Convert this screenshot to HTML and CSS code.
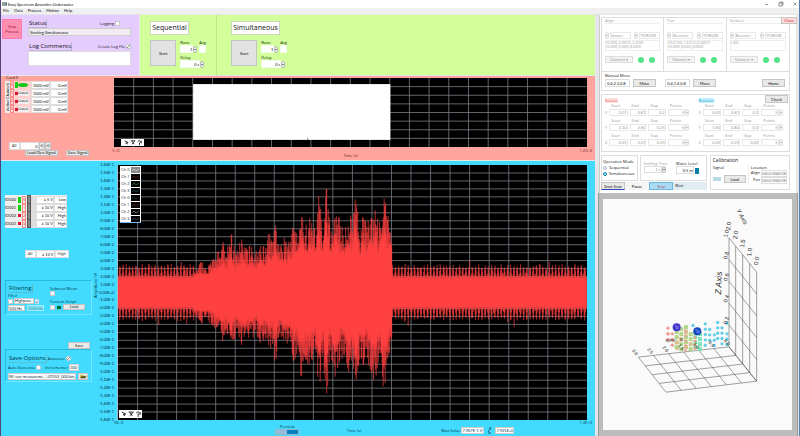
FILE: index.html
```html
<!DOCTYPE html>
<html lang="en">
<head>
<meta charset="utf-8">
<title>Easy Spectrum Acoustics Underwater</title>
<link rel="stylesheet" href="styles.css">
</head>
<body>
<header class="titlebar">
  <svg class="app-icon" viewBox="0 0 10 8"><path d="M0 1h10v6H0z" fill="#345"/><path d="M1 6V3h2v3M5 2v4M7 6V3h2" stroke="#fff" fill="none"/></svg>
  <span>Easy Spectrum Acoustics Underwater</span>
  <svg class="win-buttons" viewBox="0 0 34 6"><path d="M2 3.5h3M16 2h3v3h-3zM17 2V1h3v3h-1M30.500 1.500l3 3m0-3l-3 3" fill="none" stroke="#555" stroke-width=".6"/></svg>
</header>
<nav class="menubar"><a href="#">File</a><a href="#">Data</a><a href="#">Process</a><a href="#">Motion</a><a href="#">Help</a></nav>

<main class="workspace">
  <div class="left">
    <div class="top">
      <section class="status-panel">
        <button class="stop-process">Stop<br>Process</button>
        <div class="log">
          <div class="line"><h2>Status</h2><label class="tick logging">Logging <input type="checkbox"></label></div>
          <input class="status-text" aria-label="Status" value="Starting Simultaneous" readonly>
          <div class="line comments"><h2>Log Comments</h2><label class="tick">Create Log File <input class="ticked" type="checkbox" checked></label></div>
          <textarea aria-label="Log comments"></textarea>
        </div>
      </section>
      <section class="runs">
        <div class="run">
          <h1>Sequential</h1>
          <div class="run-body">
            <button class="start">Start</button>
            <div class="run-fields">
              <label>Runs<span class="spin w16"><input value="1"><i></i></span></label>
              <label>Avg<input class="avg"></label>
              <label class="wide">Delay<span class="spin w22"><input value="0 s"><i></i></span></label>
            </div>
          </div>
        </div>
        <div class="run second">
          <h1>Simultaneous</h1>
          <div class="run-body">
            <button class="start">Start</button>
            <div class="run-fields">
              <label>Runs<span class="spin w16"><input value="1"><i></i></span></label>
              <label>Avg<input class="avg"></label>
              <label class="wide">Delay<span class="spin w22"><input value="0 s"><i></i></span></label>
            </div>
          </div>
        </div>
      </section>
    </div>

    <section class="card-panel">
      <div class="side">
        <div class="card-title">Card 0</div>
        <div class="channels">
          <span class="vertical">Active Channels</span>
          <table id="out-table"></table>
        </div>
        <div class="all-row out-all"><span>All</span><input aria-label="All amplitude" value="0"><button>&gt;0</button><button>&lt;0</button></div>
        <div class="signal-buttons"><button>Load/Gen Signal</button><button>Save Signal</button></div>
      </div>
      <div class="chart out-chart">
        <div class="plot"><svg id="out-plot" viewBox="0 0 472 68" preserveAspectRatio="none"></svg>
          <div class="tools"><svg viewBox="0 0 24 8"><path d="M3 2l4 2-3 1M5 4l1 2M10 2h5M11 6l4-4M11 2l3 4M18 3q3-3 3 1M20 4v3M22 2v3" fill="none" stroke="#222"/></svg></div>
        </div>
        <div class="ticks"><span>5+0</span><span>1.20+0</span></div>
        <div class="axis-name">Time (s)</div>
      </div>
    </section>

    <section class="input-panel">
      <div class="side">
        <table id="in-table" class="in-table"></table>
        <div class="all-row in-all"><span>All</span><input aria-label="All range" value="± 10 V"><span>High</span></div>
        <fieldset class="group filtering">
          <div class="filter-left">
            <h2>Filtering</h2>
            <div>Filter</div>
            <div class="inline"><input type="checkbox" aria-label="Filter"><select aria-label="Filter type"><option>Highpass</option></select><b class="drop">⌄</b></div>
            <div class="inline freq"><input aria-label="Low frequency" value="100 Hz"><input class="dim" aria-label="High frequency" value="1000 Hz"></div>
          </div>
          <div class="filter-right">
            <label class="subtract">Subtract Mean<input type="checkbox"></label>
            <div class="script">Custom Script</div>
            <div class="inline"><input type="checkbox" aria-label="Custom script"><i class="led"></i><button>Load</button></div>
          </div>
        </fieldset>
        <button class="save">Save</button>
        <fieldset class="group saving">
          <div class="inline"><h2>Save Options</h2><label class="tick">Autosave<input class="round ticked" type="checkbox" checked></label></div>
          <div class="inline auto"><label class="tick">Auto Generate<input class="round" type="checkbox"></label><label class="tick inc">Incrementer<input value="300"></label></div>
          <div class="inline path"><input aria-label="File path" value="W:\usv measureme...\JD152_000.bin"><button aria-label="Browse"><svg viewBox="0 0 10 7"><path d="M1 6V1h3l1 1h3v1" fill="#cb4"/><path d="M1 6l2-3h7L8 6z" fill="#564d10"/></svg></button></div>
        </fieldset>
      </div>
      <div class="y-name"><span>Amplitude (V)</span></div>
      <div class="chart in-chart">
        <div class="y-and-plot">
          <div class="y-axis" id="y-axis"></div>
          <div class="plot"><svg id="in-plot" viewBox="0 0 469 255" preserveAspectRatio="none"></svg>
            <div class="legend" id="legend"></div>
            <div class="tools"><svg viewBox="0 0 24 8"><path d="M3 2l4 2-3 1M5 4l1 2M10 2h5M11 6l4-4M11 2l3 4M18 3q3-3 3 1M20 4v3M22 2v3" fill="none" stroke="#222"/></svg></div>
          </div>
        </div>
        <div class="ticks under"><span>0E+0</span><span>1.2E+0</span></div>
        <div class="chart-foot">
          <label class="preview">Preview<span class="toggle"><input type="checkbox" checked></span></label>
          <span class="time">Time (s)</span>
          <div class="max"><label>Max Value <input value="7.907E-1 V"></label><svg viewBox="0 0 5 7"><path d="M1 6h3M1 5l3-4H2" fill="none" stroke="#157"/></svg><input aria-label="Time of max" value="7.921E+0"></div>
        </div>
      </div>
    </section>
  </div>

  <div class="right">
    <section class="motion">
      <button class="close">Close</button>
      <div class="motion-box">
        <div class="devices" id="devices"></div>
        <div class="manual">
          <div>Manual Move</div>
          <div class="manual-row">
            <div><input aria-label="Align target" value="0.4,2.3,0.8"><button>Move</button></div>
            <div><input aria-label="Pan target" value="0.4,1.6,0.8"><button>Move</button></div>
            <button class="home">Home</button>
          </div>
        </div>
      </div>
      <div class="scan-box">
        <div class="scan-half"><span class="tag source">Source</span><table id="src-table"></table></div>
        <div class="scan-half receiver-half"><div class="scan-head"><span class="tag receiver">Receiver</span><button>Check</button></div><table id="rec-table"></table></div>
      </div>
      <div class="ops">
        <div class="ops-left">
          <div class="ops-row">
            <fieldset class="mode"><div>Operation Mode</div><label><input type="radio" name="mode">Sequential</label><label><input type="radio" name="mode" checked>Simultaneous</label></fieldset>
            <div class="water">
              <label class="faint">Settling Time<span class="spin"><input value="1 s"><i></i></span></label>
              <label>Water Level<span class="level"><input value="0.5 m"><i></i></span></label>
            </div>
          </div>
          <div class="scan-buttons"><button class="scan">Start Scan</button><button class="plain">Pause</button><button class="stop">Stop</button><span>Wait</span></div>
        </div>
        <div class="calibration">
          <div class="cal-title">Calibration</div>
          <div class="cal-body">
            <div>Signal<div class="inline cal-load"><i class="mini"></i><button>Load</button></div></div>
            <div class="location"><div>Location</div><label>Align <input value="0402.WAV28"></label><label>Pan <input value="0402.WAV28"></label></div>
          </div>
        </div>
      </div>
    </section>
    <section class="scene"><svg id="scene" viewBox="24 30 567 690"></svg></section>
  </div>
</main>
<script src="app.js"></script>
</body>
</html>
```
FILE: styles.css
```css
* { box-sizing: border-box; }
body { margin: 0; min-height: 100vh; display: flex; flex-direction: column; font: 4px/5px "Open Sans", "Liberation Sans", sans-serif; color: #111; background: #e4e6ea; border-left: 1px solid #547; border-right: 1px solid #5580b0; }
h1, h2 { margin: 0; font-weight: 400; }
h2 { font-size: 6px; line-height: 7px; border: 1px solid transparent; border-right-color: #8887; border-bottom-color: #8885; }
button, input, select, textarea { font: inherit; font-family: Lato, "Open Sans", sans-serif; color: inherit; margin: 0; border-radius: 0; }
button { padding: 0 2px; border: 1px solid #c4c4c4; background: #e9e9e9; height: 8px; white-space: nowrap; }
input, select { appearance: none; border: 1px solid #ccc; background: #fff; height: 8px; padding: 0; min-width: 0; }
input[type=checkbox] { width: 5px; height: 5px; padding: 0; border: 1px solid #c8c8c8; flex: none; background: #fff; }
input[type=checkbox].ticked { background: linear-gradient(135deg, #fff 40%, #777 40%, #777 60%, #fff 60%); }
fieldset { margin: 0; padding: 0; border: 0; min-width: 0; }
table { border-spacing: 0; border-collapse: collapse; }
td, th { padding: 0; font-weight: 400; }
i { font-style: normal; }

.titlebar { height: 8px; background: #fff; display: flex; align-items: center; padding: 0 2px 0 1px; font-family: Lato, sans-serif; }
.app-icon { width: 5px; height: 4px; margin-right: 1px; }
.win-buttons { width: 34px; height: 6px; margin-left: auto; }
.menubar { height: 6px; background: #f0f0f0; display: flex; gap: 5px; padding: 0 2px; font-family: Lato, sans-serif; }
.menubar a { color: inherit; text-decoration: none; }
.workspace { flex: 1; display: grid; grid-template-columns: 594fr 204fr; padding-top: 1px; }
.left { display: grid; grid-template-rows: auto auto 1fr; row-gap: 1px; min-width: 0; }
.top { display: grid; grid-template-columns: 138fr 454fr; column-gap: 1px; }

.status-panel { background: #e5ccff; display: flex; gap: 6px; padding: 4px 8px 9px 1px; }
.stop-process { width: 20px; height: 20px; background: #ff8fb0; border: 1px solid #f7a; color: #a02048; }
.log { flex: 1; display: flex; flex-direction: column; }
.line { display: flex; justify-content: space-between; align-items: center; }
.tick { display: flex; align-items: center; gap: 1px; }
.logging { margin-right: 11px; }
.status-text { height: 8px; padding-left: 1px; background: #f0ecf2; }
.comments { margin-top: 6px; }
.log textarea { flex: 1; resize: none; border: 1px solid #ddd; height: 15px; min-height: 15px; padding: 1px; }
.runs { background: #d2ff99; display: flex; }
.run { padding: 6px 10px 0; width: 77px; border-right: 1px solid #bde488; }
.second { padding-left: 14px; border: 0; }
.run h1 { width: max-content; background: #fff; font-size: 7px; line-height: 12px; padding: 0 1px; border: 1px solid #ccd8bb; }
.run-body { display: flex; gap: 4px; margin-top: 5px; }
.start { width: 26px; height: 26px; flex: none; background: #e2e2e2; }
.run-fields { display: flex; flex-wrap: wrap; gap: 0 2px; width: 27px; flex: none; align-content: flex-start; }
.run-fields label, .water label { display: flex; flex-direction: column; }
.run-fields .wide { margin-top: 2px; width: 100%; }
.avg { width: 7px; }
.spin { display: flex; align-items: center; }
.spin input { width: 100%; height: 7px; text-align: right; }
.run-fields input { height: 8px; border-color: #f2faea; }
.spin i { flex: none; width: 4px; height: 7px; border: 1px solid #bbb; border-radius: 2px; background: linear-gradient(#eee 2px, #888 2px, #888 3px, #eee 3px); }
.w16 { width: 17px; }
.w22 { width: 24px; }

.card-panel { background: #ffa59e; display: grid; grid-template-columns: 108fr 480fr; padding: 0 0 0 4px; }
.side { min-width: 0; }
.card-title { padding-left: 1px; line-height: 4px; margin-bottom: 1px; }
.channels { display: flex; width: 63px; background: #ffd2ce; }
.vertical { writing-mode: vertical-rl; transform: rotate(180deg); text-align: center; width: 5px; height: 32px; background: #eee; white-space: nowrap; font-family: Lato, sans-serif; }
.channels table { flex: 1; }
.channels td { height: 8px; }
.channels input, .in-table input { width: 100%; display: block; text-align: right; border-color: #ddd; }
.num { display: block; width: 4px; line-height: 6px; border: 1px solid #f88; color: #c00; font-size: 3px; }
.led { display: block; width: 3px; height: 3px; background: #e01030; }
.led.on { height: 6px; background: #10d010; }
.pill { display: block; width: 10px; height: 4px; border-radius: 50%; background: #10c818; }
.tiny { background: #eee; display: block; width: 11px; font-size: 3px; }
.all-row { display: flex; align-items: center; }
.all-row span { background: #fff; line-height: 6px; height: 8px; border: 1px solid #ddd; padding: 0 2px; }
.all-row input { width: 19px; text-align: right; border-color: #ddd; }
.out-all { margin: 29px 0 0 4px; }
.out-all button { padding: 0; width: 6px; font-size: 3px; }
.signal-buttons { display: flex; gap: 8px; margin: 0 0 4px 20px; }
.signal-buttons button { height: 6px; line-height: 4px; padding: 0 1px; }
.chart { display: flex; flex-direction: column; min-width: 0; }
.plot { position: relative; flex: 1; min-height: 0; background: #000; }
.plot > svg { position: absolute; width: 100%; height: 100%; display: block; }
.tools { position: absolute; left: 7px; bottom: 1px; width: 23px; height: 7px; background: #fff; }
.tools svg { display: block; width: 100%; height: 100%; }
.out-chart { padding: 2px 8px 0 1px; }
.out-chart .ticks { color: #622; }
.ticks { display: flex; justify-content: space-between; margin: 1px -5px 0 -2px; }
.axis-name { text-align: center; color: #622; margin-bottom: 2px; }

.input-panel { background: #42dbff; display: grid; grid-template-columns: 87fr 6fr 496fr; padding: 4px 0 0 4px; color: #034; }
.in-table { width: 62px; margin-top: 30px; background: #eee; color: #222; }
.in-table td { height: 8px; }
.in-table td:first-child { font-family: Lato, sans-serif; }
.in-table .led { margin: 0 1px; }
.bar { width: 3px; background: #888; border: 1px solid #555; }
.knob { width: 6px; background: #ddd; }
.in-all { margin: 22px 0 0 20px; color: #222; }
.group { border: 1px solid #27b8df; border-right-color: #75e6ff; border-bottom-color: #75e6ff; }
.filtering { display: flex; gap: 6px; height: 35px; margin-top: 22px; padding: 3px 2px; }
.filter-left { width: 36px; flex: none; }
.filter-left h2 { width: max-content; }
.inline { display: flex; align-items: center; gap: 1px; }
.inline select { width: 20px; height: 6px; line-height: 4px; }
.drop { font-weight: 400; background: #cde; width: 4px; line-height: 5px; }
.freq { margin-top: 1px; gap: 2px; }
.freq input { width: 17px; height: 6px; line-height: 4px; }
.freq .dim { background: #82e4fb; border-color: #9ef; color: #499; }
.filter-right { padding-top: 2px; white-space: nowrap; }
.filter-right .inline { gap: 2px; }
.subtract { display: flex; flex-direction: column; }
.filter-right .led { background: #063; width: 4px; }
.filter-right button { width: 22px; height: 6px; line-height: 4px; }
.script { margin-top: 3px; }
.save { display: block; margin: 27px 2px 0 auto; width: 22px; height: 7px; line-height: 4px; color: #222; }
.saving { padding: 4px 2px 2px; height: 33px; }
.tick .round { border-radius: 2px; }
.auto { justify-content: space-between; padding-right: 10px; margin: 1px 0 2px; }
.inc input { width: 10px; height: 7px; }
.path { gap: 2px; }
.path input { width: 68px; height: 7px; }
.path button { width: 10px; height: 7px; padding: 0; }
.path svg { display: block; width: 8px; height: 5px; }
.y-name { display: flex; align-items: center; justify-content: center; padding-bottom: 30px; }
.y-name span { writing-mode: vertical-rl; transform: rotate(180deg); }
.in-chart { padding-right: 8px; }
.y-and-plot { display: flex; flex: 1; }
.y-axis { display: flex; flex-direction: column; justify-content: space-between; width: 19px; margin: -2px 0; line-height: 4px; text-align: right; padding-right: 3px; font-family: Lato, sans-serif; }
.in-chart .plot { border-left: 1px solid #abc; }
.in-chart .tools { left: 1px; bottom: 2px; height: 8px; }
.legend { position: absolute; left: 2px; top: 1px; width: 21px; padding: 0 1px; background: #fff; border-bottom: 1px solid #7bf; color: #222; }
.legend div { display: flex; justify-content: space-between; align-items: center; height: 7px; }
.legend svg { width: 9px; height: 6px; background: #000; }
.legend .active svg { background: #888; }
.under { margin-left: 16px; margin-top: 1px; line-height: 4px; }
.chart-foot { display: grid; grid-template-columns: 201px 62px 1fr; align-items: center; height: 11px; padding-bottom: 1px; }
.preview { justify-self: end; width: 24px; line-height: 4px; text-align: center; }
.toggle { display: block; background: #9bd; border: 1px solid #8bc; }
.toggle input[type=checkbox] { display: block; margin-left: auto; width: 11px; height: 4px; border: 0; background: #087fc0; }
.time { text-align: right; }
.max { display: flex; align-items: center; gap: 3px; padding-left: 80px; }
.max label { display: flex; align-items: center; gap: 1px; white-space: nowrap; }
.max input { height: 7px; width: 23px; }
.max svg { width: 5px; height: 7px; }
.max > input { width: 19px; }

.right { display: grid; grid-template-rows: auto 1fr; min-width: 0; }
.motion { position: relative; background: #fff; margin: 0 3px 0 4px; border-left: 1px solid #ccc; padding: 2px 6px 3px 1px; display: flex; flex-direction: column; gap: 3px; }
.motion input { border-color: #ddd; }
.close { position: absolute; right: -1px; top: 2px; height: 7px; line-height: 4px; background: #fdd; color: #c33; }
.motion-box, .scan-box { border: 1px solid #ddd; }
.devices { display: grid; grid-template-columns: 1fr 1fr 1fr; color: #999; }
.device { border-right: 1px solid #ddd; padding: 1px 3px; height: 53px; }
.device:last-child { border: 0; }
.dev-name { border-bottom: 1px solid #eee; line-height: 4px; }
.dev-row { display: flex; justify-content: space-between; margin-top: 8px; }
.dev-row .spin { gap: 1px; }
.dev-row select { width: 21px; height: 7px; border-color: #e8e8e8; }
.dev-row .spin i, .scan-half .spin i { opacity: .5; }
.readout { border: 1px solid #eee; height: 11px; margin-top: 1px; line-height: 4px; white-space: nowrap; }
.connect { display: flex; align-items: center; gap: 5px; margin-top: 5px; }
.connect button { width: 28px; height: 7px; line-height: 4px; background: #f3f3f3; border-color: #ddd; }
.connect i { width: 6px; height: 6px; border-radius: 50%; background: #55e388; }
.manual { border-top: 1px solid #ddd; padding: 1px 3px 3px; }
.manual-row { display: grid; grid-template-columns: 1fr 1fr 1fr; padding-top: 1px; }
.manual-row div { display: flex; gap: 3px; }
.manual-row input { width: 25px; padding-left: 1px; }
.manual-row button { width: 23px; }
.manual-row .home { justify-self: end; margin-right: 1px; }
.scan-box { display: grid; grid-template-columns: 1fr 1fr; height: 58px; color: #999; }
.scan-half { padding: 3px 1px 0 3px; }
.receiver-half { padding-top: 0; }
.scan-head { display: flex; justify-content: space-between; height: 8px; }
.scan-head button { width: 23px; color: #222; }
.tag { display: inline-block; height: 5px; line-height: 5px; }
.source { color: #d66; background: #fdd; }
.receiver { color: #299dbb; background: #bff0ff; margin-top: 3px; }
.scan-half table { width: 86px; }
.scan-half th { text-align: left; line-height: 6px; padding-left: 2px; }
.scan-half td { padding-right: 2px; padding-bottom: 2px; }
.scan-half td input { width: 100%; height: 7px; display: block; text-align: right; border-color: #e6e6e6; }
.ops { display: grid; grid-template-columns: 108fr 82fr; gap: 3px; }
.ops-row { display: grid; grid-template-columns: 37fr 68fr; gap: 2px; }
.mode, .water, .calibration { border: 1px solid #ddd; }
.mode { padding: 3px 1px; height: 26px; white-space: nowrap; }
.mode label { display: flex; align-items: center; gap: 2px; margin-top: 1px; }
.mode input { width: 4px; height: 4px; border-radius: 50%; padding: 0; border: 1px solid #abc; }
.mode input:checked { border-color: #07a; background: #cff; }
.water { display: flex; gap: 8px; padding: 5px 3px; white-space: nowrap; }
.faint { color: #999; }
.water .spin { width: 22px; }
.level { display: flex; }
.level input { width: 18px; text-align: right; }
.level i { width: 4px; height: 6px; background: #087da8; margin: 2px 0 0 1px; }
.scan-buttons { display: flex; align-items: center; margin-top: 1px; background: #f5f5f5; }
.scan-buttons button { width: 24px; }
.scan-buttons .scan { border-bottom-color: #34b; padding: 0 1px; }
.scan-buttons .plain { background: transparent; border-color: transparent; }
.scan-buttons .stop { background: #a9dcf2; border-color: #6bb8dc; color: #a57; }
.scan-buttons span { flex: 1; padding-left: 2px; background: #e1edf3; line-height: 8px; }
.calibration { padding: 2px; height: 35px; }
.cal-title { font-size: 5px; }
.cal-body { display: flex; justify-content: space-between; margin-top: 2px; }
.cal-load { margin-top: 5px; gap: 3px; }
.cal-load button { width: 22px; }
.mini { width: 8px; height: 4px; background: #b7dbe8; }
.location label { display: flex; justify-content: flex-end; gap: 1px; }
.location { border-left: 1px solid #eee; padding-left: 2px; }
.location input { width: 26px; height: 7px; color: #777; }
.scene { background: #bcbcbc; border: 1px solid #999; border-width: 0 1px; margin: 0 1px 0 3px; padding: 6px 5px 6px 4px; display: flex; }
.scene svg { flex: 1; width: 100%; min-height: 0; background: #fafafa; }
.scene text { font-family: "Liberation Sans", sans-serif; }
```
FILE: app.js
```js
const byId = id => document.getElementById(id);

function grid(w, h, cols, rows) {
  let d = '';
  for (let i = 1; i < cols; i++) d += `M${w * i / cols} 0v${h}`;
  for (let i = 1; i < rows; i++) d += `M0 ${h * i / rows}h${w}`;
  return `<path d="${d}" stroke="#7c7c86" stroke-width=".8" fill="none"/>`;
}

byId('out-plot').innerHTML = grid(472, 68, 24, 8) +
  '<rect x="79" y="6" width="197" height="55" fill="#fff"/><path d="M193.500 59v2" stroke="#333" stroke-width=".6"/>';

// Received signal: steady noise floor with one growing pulse.
let seed = 7;
const rand = () => (seed = (seed * 16807) % 2147483647) / 2147483647;
const peaks = [[76, 22], [83, 32], [88, 26], [96, 37], [105, 50], [108, 40], [113, 60], [118, 40], [124, 56], [129, 44], [133, 50], [138, 42], [143, 53], [148, 46], [151, 64], [154, 50], [157, 74], [161, 46], [166, 56], [170, 50], [175, 68], [179, 64], [183, 86], [187, 68], [191, 78], [197, 64], [201, 100], [205, 66], [208, 111], [212, 64], [217, 94], [223, 66], [228, 68], [232, 88], [234, 70], [238, 104], [242, 62], [245, 78], [249, 68], [257, 92], [261, 70], [265, 100], [269, 84], [271, 68], [274, 70]];
function envelope(x) {
  for (let i = 1; i < peaks.length; i++) {
    if (x <= peaks[i][0]) {
      const [a, p] = peaks[i - 1], [b, q] = peaks[i];
      return p + (q - p) * (x - a) / (b - a);
    }
  }
  return 0;
}
let spikes = '';
const core = [[], []];
for (let x = 0; x < 469; x += .5) {
  const pulse = x > 76 && x < 274;
  const env = pulse ? envelope(x) : 0;
  for (let s = 0; s < 2; s++) {
    const k = rand();
    const beat = Math.pow(Math.abs(Math.sin(x * .98)), 3);
    const a = pulse ? Math.max(19, env * (.56 + .45 * k)) : 15 + beat * (10 + 4 * k) + (k > .95 ? 7 * rand() : 0);
    const y = 127.500 + (s ? a : -a);
    spikes += `M${x + .25} 127V${y.toFixed(1)}`;
    const c = pulse ? Math.max(18, env * (.5 + .22 * rand())) : 15;
    core[s].push(`${x},${(127.500 + (s ? c : -c)).toFixed(1)}`);
  }
}
byId('in-plot').innerHTML = grid(469, 255, 24, 32) +
  `<path d="${spikes}" stroke="#ff4040" stroke-width=".7" fill="none"/>` +
  `<polygon points="${core[0].concat(core[1].reverse()).join(' ')}" fill="#ff4040"/>`;

let axis = '';
for (let i = 16; i >= -16; i--) {
  const v = Math.abs(i);
  axis += `<span>${i < 0 ? '-' : ''}${v >= 10 ? (v / 10).toFixed(2) + 'E-1' : v ? v + '.00E-2' : '0.00E+0'}</span>`;
}
byId('y-axis').innerHTML = axis;

const colors = ['#fff', '#a33', '#4a4', '#288', '#265', '#a44', '#bbb', '#567'];
byId('legend').innerHTML = colors.map((c, i) =>
  `<div class="${i ? '' : 'active'}">Ch ${i % 4}<svg viewBox="0 0 9 6"><path d="M1 4l2-2 2 2 3-2" fill="none" stroke="${c}" stroke-width=".5"/></svg></div>`).join('');

byId('out-table').innerHTML = [3000, 1000, 1000, 1000].map((mv, i) =>
  `<tr><td><span class="num">${i}</span></td><td><i class="led ${i ? '' : 'on'}"></i></td><td>${i ? '<span class="tiny">Lowest</span>' : '<i class="pill"></i>'}</td>` +
  `<td style="width:19px"><input aria-label="Amplitude ${i}" value="${mv} mV"></td><td style="width:18px"><input aria-label="Offset ${i}" value="0 mV"></td></tr>`).join('');

byId('in-table').innerHTML = [['± 5 V', 'Low'], ['± 10 V', 'High'], ['± 10 V', 'High'], ['± 10 V', 'High']].map((r, i) =>
  `<tr><td>ID00${i}</td><td><i class="led ${i < 2 ? 'on' : ''}"></i></td><td><span class="num">${i}</span></td><td class="bar"></td><td class="knob"></td>` +
  `<td style="width:18px"><input aria-label="Range ${i}" value="${r[0]}"></td><td style="width:13px"><input aria-label="Level ${i}" value="${r[1]}"></td></tr>`).join('');

byId('devices').innerHTML = [
  ['Align', 'Source', '(0.000,2.0015,2.350)<br>(0.000,0.000,0.000)'],
  ['Pan', 'Receiver', '(0.0150,1.6013,0.0407)<br>(0.000,0.000,0.000)'],
  ['Vertical', 'Receiver', '(.00)']
].map(([name, kind, pos]) => `<div class="device"><div class="dev-name">${name}</div>
  <div class="dev-row"><span class="spin"><i></i><select aria-label="${name} role"><option>${kind}</option></select></span>
  <span class="spin"><i></i><select aria-label="${name} port"><option>TCIROIB</option></select></span></div>
  <div class="readout">${pos}</div><div class="connect"><button>Connect ▾</button><i></i><i></i></div></div>`).join('');

function scanTable(id, rows) {
  byId(id).innerHTML = rows.map((r, i) =>
    `<tr><th></th><th>Start</th><th>End</th><th>Gap</th><th>Points</th></tr><tr><td>${'XYZ'[i]}</td>` +
    r.map((v, j) => `<td>${j === 3 ? `<span class="spin"><input aria-label="Points" value="${v}"><i></i></span>` : `<input aria-label="Value" value="${v}">`}</td>`).join('') + '</tr>').join('');
}
scanTable('src-table', [['0.01', '0.81', '0.2', 5], ['2.10', '2.80', '0.25', 5], ['0.25', '0.25', '0.25', 5]]);
scanTable('rec-table', [['0.01', '0.81', '0.2', 5], ['1.60', '0.80', '0.2', 5], ['0.25', '0.25', '0.05', 5]]);

// Scan volume: wall and floor grids, then measurement points.
let g = '';
const line = (a, b, c, d) => { g += `M${a} ${b}L${c} ${d}`; };
[402, 422, 443, 464, 485].forEach((x, i) => line(x, 145 + 25.750 * i, x, 472 + 25.750 * i));
for (let i = 0; i < 6; i++) line(402, 145 + 65.400 * i, 485, 248 + 65.400 * i);
for (let i = 0; i < 5; i++) line(130 + 20.750 * i, 503 + 26.250 * i, 402 + 20.750 * i, 472 + 25.750 * i);
for (let i = 0; i < 7; i++) line(130 + 45.300 * i, 503 - 5.200 * i, 213 + 45.300 * i, 608 - 5.500 * i);
let s = `<path d="${g}" fill="none" stroke="#444" stroke-width="1.500"/>`;
const dot = (x, y, c, r = 5) => { s += `<circle cx="${x}" cy="${y}" r="${r}" fill="${c}"/>`; };
const square = (x, y, c) => { s += `<rect x="${x - 6}" y="${y - 6}" width="12" height="12" fill="${c}"/>`; };
[[219, 416, 2], [232, 433, 3], [246, 443, 3], [219, 433, 1], [219, 450, 1]].forEach(([x, y, n]) => {
  for (let j = 0; j < n; j++) dot(x, y + j * 17, '#f39c98');
});
for (let i = 0; i < 6; i++) for (let j = 0; j < 5; j++) {
  const x = 245 + i * 14, y = 413 + j * 15 + (i % 2) * 6;
  if (y < 486 && !(i > 2 && j < 1)) square(x, y, i > 3 ? '#7de3b8' : (i + j) % 3 ? '#b1d58b' : '#d6c393');
}
for (let i = 0; i < 5; i++) { dot(272, 423 + i * 15, '#f29a8d', 4); dot(300, 433 + i * 11, '#ec9c87', 4); }
[[294, 408, 1], [331, 403, 5], [344, 420, 3], [358, 436, 3], [368, 399, 4], [381, 415, 4], [396, 433, 3], [396, 401, 1]].forEach(([x, y, n]) => {
  for (let j = 0; j < n; j++) dot(x, y + j * 16, '#65cee9');
});
s += '<circle cx="245" cy="413" r="12" fill="#4334ca"/><circle cx="307" cy="425" r="12" fill="#1648c2"/><path d="M239 409h5v8h5v-8M301 421h5v8h6v-8" stroke="#98a3fa" fill="none" stroke-width="2"/>';
const text = (x, y, r, size, t, extra = '') => { s += `<text transform="translate(${x} ${y}) rotate(${r})" font-size="${size}" fill="#222" ${extra}>${t}</text>`; };
['1.0', '0.8', '0.6', '0.4', '0.2'].forEach((t, i) => text(396, 145 + 65 * i, -75, 16, t));
['2.0', '2.0', '1.5', '1.0', '0.0'].forEach((t, i) => text(405 + 21 * i, 123 + 26 * i, -82, 18, t));
text(424, 62, 62, 18, 'Y Axis', 'font-style="italic"');
text(378, 315, -88, 25, 'Z Axis', 'font-style="italic"');
text(240, 448, 176, 15, 'Axis', 'font-style="italic"');
text(254, 456, -8, 15, 'X', '');
['3.0', '2.5', '2.0', '1.5', '1.0', '0.5', '0.0'].forEach((t, i) => text(110 + 46 * i, 484 - 5 * i, 50, 14, t));
byId('scene').innerHTML = s;
```
